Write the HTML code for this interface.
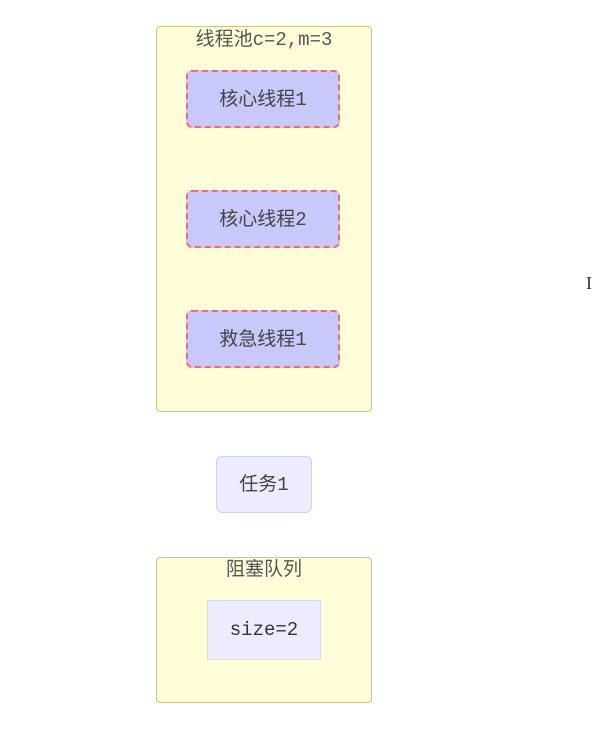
<!DOCTYPE html><html><head><style>
body{margin:0;width:606px;height:754px;background:#fff;position:relative;font-family:"Liberation Mono","Noto Sans CJK SC",monospace;color:#333}
div{position:absolute;box-sizing:border-box}
.y{background:#fffed8;border:1.5px solid #c9c68a;border-radius:4px}
.t{font-size:19px;text-align:center;white-space:nowrap;color:#555}
.c{left:186px;width:154px;height:58px;background:#c8c8fa;border:2.5px dashed #ee6e6e;border-radius:6px;display:flex;align-items:center;justify-content:center;font-size:19px;color:#444;padding-bottom:4px}
</style></head><body>
<div class="y" style="left:156px;top:26px;width:216px;height:386px"></div>
<div class="t" style="left:156px;top:24px;width:216px">线程池c=2,m=3</div>
<div class="c" style="top:70px">核心线程1</div>
<div class="c" style="top:190px">核心线程2</div>
<div class="c" style="top:310px">救急线程1</div>
<div style="left:216px;top:456px;width:96px;height:57px;background:#ececfe;border:1.5px solid #d0d0f0;border-radius:6px;display:flex;align-items:center;justify-content:center;font-size:19px;color:#444;padding-bottom:4px">任务1</div>
<div class="y" style="left:156px;top:557px;width:216px;height:146px"></div>
<div class="t" style="left:156px;top:554px;width:216px">阻塞队列</div>
<div style="left:207px;top:600px;width:114px;height:60px;background:#ececfe;border:1px solid #d8d8f0;display:flex;align-items:center;justify-content:center;font-size:19px;color:#333">size=2</div>
<div style="left:586px;top:273px;font-size:18px;color:#333;font-family:'Liberation Serif',serif">I</div>
</body></html>
